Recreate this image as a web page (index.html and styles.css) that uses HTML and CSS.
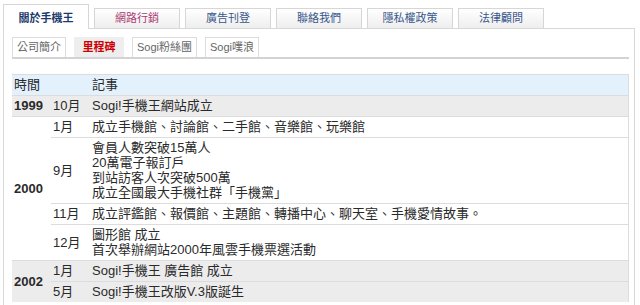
FILE: index.html
```html
<!DOCTYPE html>
<html lang="zh-Hant">
<head>
<meta charset="utf-8">
<title>關於手機王 - 里程碑</title>
<link rel="stylesheet" href="styles.css">
</head>
<body>
<div class="page">
  <ul class="tabs">
    <li class="tab active">關於手機王</li>
    <li class="tab tab-visited">網路行銷</li>
    <li class="tab">廣告刊登</li>
    <li class="tab">聯絡我們</li>
    <li class="tab">隱私權政策</li>
    <li class="tab">法律顧問</li>
  </ul>
  <div class="panel">
    <ul class="subtabs">
      <li class="subtab">公司簡介</li>
      <li class="subtab active">里程碑</li>
      <li class="subtab">Sogi粉絲團</li>
      <li class="subtab">Sogi噗浪</li>
    </ul>
    <table class="milestones">
      <colgroup>
        <col class="col-year">
        <col class="col-month">
        <col class="col-event">
      </colgroup>
      <thead>
        <tr class="head">
          <th colspan="2">時間</th>
          <th>記事</th>
        </tr>
      </thead>
      <tbody class="grp-gray">
        <tr>
          <td class="year">1999</td>
          <td>10月</td>
          <td>Sogi!手機王網站成立</td>
        </tr>
      </tbody>
      <tbody class="grp-white">
        <tr>
          <td class="year" rowspan="5">2000</td>
          <td>1月</td>
          <td>成立手機館、討論館、二手館、音樂館、玩樂館</td>
        </tr>
        <tr>
          <td>9月</td>
          <td>會員人數突破15萬人<br>20萬電子報訂戶<br>到站訪客人次突破500萬<br>成立全國最大手機社群「手機黨」</td>
        </tr>
        <tr>
          <td>11月</td>
          <td>成立評鑑館、報價館、主題館、轉播中心、聊天室、手機愛情故事。</td>
        </tr>
        <tr>
          <td>12月</td>
          <td>圖形館 成立<br>首次舉辦網站2000年風雲手機票選活動</td>
        </tr>
      </tbody>
      <tbody class="grp-gray">
        <tr>
          <td class="year" rowspan="2">2002</td>
          <td>1月</td>
          <td>Sogi!手機王 廣告館 成立</td>
        </tr>
        <tr>
          <td>5月</td>
          <td>Sogi!手機王改版V.3版誕生</td>
        </tr>
      </tbody>
    </table>
  </div>
</div>
</body>
</html>
```
FILE: styles.css
```css
html, body {
  margin: 0;
  padding: 0;
  background: #fff;
}

body {
  font-family: "Liberation Sans", "Noto Sans CJK TC", sans-serif;
  color: #333;
  overflow: hidden;
}

.page {
  margin: 4px 0 0 3px;
  width: 632px;
}

.tabs {
  list-style: none;
  margin: 0;
  padding: 0;
  display: flex;
  align-items: flex-end;
  gap: 5px;
  height: 24px;
}

.tab {
  box-sizing: border-box;
  width: 86px;
  height: 20px;
  border: 1px solid #d6d6d6;
  border-bottom: none;
  background: linear-gradient(#ffffff, #eeeeee);
  text-align: center;
  font-size: 11px;
  line-height: 19px;
  color: #36568a;
}

.tab-visited {
  color: #ac3a72;
}

.tab.active {
  height: 25px;
  margin-bottom: -1px;
  position: relative;
  background: #fff;
  color: #1b3a6c;
  font-weight: bold;
  line-height: 26px;
}

.panel {
  border: 1px solid #d8d8d8;
  padding: 8px 5px 20px 8px;
}

.subtabs {
  list-style: none;
  margin: 0;
  padding: 0;
  display: flex;
  gap: 8px;
  border-bottom: 2px solid #d3d3d3;
}

.subtab {
  box-sizing: border-box;
  min-width: 50px;
  height: 20px;
  padding: 0 4px;
  border: 1px solid #dcdcdc;
  border-bottom: none;
  text-align: center;
  font-size: 11px;
  line-height: 19px;
  color: #666;
}

.subtab.active {
  background: #eeeeee;
  border-color: #eeeeee;
  color: #cc0000;
  font-weight: bold;
}

.milestones {
  width: 100%;
  margin-top: 15px;
  border-collapse: collapse;
  font-size: 13px;
  line-height: 15px;
  color: #2a2a2a;
}

.col-year {
  width: 39px;
}

.col-month {
  width: 39px;
}

.milestones th,
.milestones td {
  padding: 2px 2px 3px 2px;
  border-top: 1px solid #dcdcdc;
  text-align: left;
  vertical-align: middle;
}

.milestones th {
  font-weight: normal;
}

.milestones tr > :last-child {
  border-right: 1px solid #dcdcdc;
}

.head th {
  background: #e3f1fd;
  border-bottom: 1px solid #dcdcdc;
}

.milestones .year {
  font-weight: bold;
}

.grp-gray td {
  background: #ececec;
}

.grp-white td {
  background: #fff;
}
```
